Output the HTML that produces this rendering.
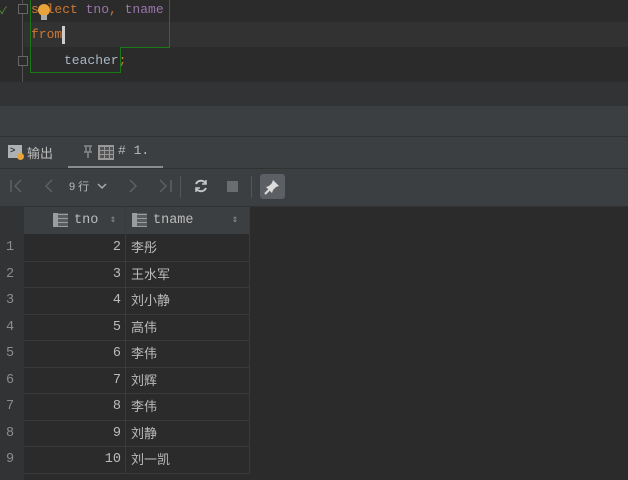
<!DOCTYPE html><html><head><meta charset="utf-8"><style>
*{margin:0;padding:0;box-sizing:border-box}
body{width:628px;height:480px;overflow:hidden;background:#2b2b2b;font-family:"Liberation Mono","Noto Sans CJK SC",monospace;position:relative}
.a{position:absolute}
.code{font-size:13px;line-height:22px}
.cjk{font-family:"Liberation Sans","Noto Sans CJK SC",sans-serif}
</style></head><body>
<div class="a" style="left:0;top:22px;width:628px;height:25px;background:#323232"></div>
<div class="a" style="left:0;top:0;width:24px;height:82px;background:#2b2b2b"></div>
<div class="a" style="left:22px;top:0;width:1px;height:82px;background:#555"></div>
<div class="a" style="left:18px;top:4px;width:10px;height:10px;border:1px solid #666;background:#2b2b2b"></div>
<div class="a" style="left:18px;top:56px;width:10px;height:10px;border:1px solid #666;background:#2b2b2b"></div>
<div class="a" style="left:0;top:2px;color:#5a9e3a;font-size:10px">✓</div>
<svg class="a" style="left:30px;top:0" width="142" height="74"><path d="M0.5 0V72.5H90.5V47.5H139.5V0" fill="none" stroke="#177a17" stroke-width="1" shape-rendering="crispEdges"/></svg>
<div class="a code" style="left:31px;top:-1px;color:#cc7832">select <span style="color:#9876aa">tno</span>, <span style="color:#9876aa">tname</span></div>
<div class="a" style="left:38px;top:4px;width:12px;height:12px;border-radius:50%;background:#e8a33b"></div>
<div class="a" style="left:41px;top:15px;width:6px;height:5px;background:#aaa"></div>
<div class="a code" style="left:31px;top:24px;color:#cc7832">from</div>
<div class="a" style="left:62px;top:26px;width:3px;height:18px;background:#ccc"></div>
<div class="a code" style="left:64px;top:50px;color:#a9b7c6">teacher<span style="color:#cc7832">;</span></div>
<div class="a" style="left:0;top:82px;width:628px;height:24px;background:#313335"></div>
<div class="a" style="left:0;top:106px;width:628px;height:31px;background:#3c3f41"></div>
<div class="a" style="left:0;top:136px;width:628px;height:1px;background:#323232"></div>
<div class="a" style="left:0;top:137px;width:628px;height:31px;background:#3c3f41"></div>
<div class="a" style="left:8px;top:145px;width:14px;height:13px;background:#aeb1b3"></div>
<div class="a" style="left:10px;top:147px;color:#333;font-size:9px;line-height:9px;font-weight:bold">&gt;</div>
<div class="a" style="left:17px;top:153px;width:7px;height:7px;border-radius:50%;background:#e8a33b"></div>
<div class="a cjk" style="left:27px;top:143px;color:#bbb;font-size:13px">输出</div>
<svg class="a" style="left:82px;top:145px" width="12" height="14"><path d="M2 1H10M4 1V7H8V1M2 7H10M6 7V13" stroke="#888" fill="none" stroke-width="1.5"/></svg>
<div class="a" style="left:98px;top:145px;width:16px;height:15px;border:1px solid #999;background:repeating-linear-gradient(90deg,#999 0 1px,transparent 1px 5px),repeating-linear-gradient(0deg,#999 0 1px,#555 1px 4px)"></div>
<div class="a" style="left:118px;top:143px;color:#bbb;font-size:13px">#&nbsp;1.</div>
<div class="a" style="left:68px;top:166px;width:95px;height:2px;background:#8a8d90"></div>
<div class="a" style="left:0;top:168px;width:628px;height:1px;background:#323232"></div>
<div class="a" style="left:0;top:169px;width:628px;height:37px;background:#3c3f41"></div>
<svg class="a" style="left:8px;top:178px" width="170" height="16" fill="none" stroke="#5d6063" stroke-width="1.5"><path d="M3 2V14M13 2L7 8L13 14"/><path d="M44 2L38 8L44 14"/><path d="M122 2L128 8L122 14"/><path d="M152 2L158 8L152 14M163 2V14"/></svg>
<div class="a cjk" style="left:69px;top:178px;color:#bbb;font-size:11px">9 行</div>
<svg class="a" style="left:97px;top:183px" width="10" height="7"><path d="M1 1L5 5L9 1" stroke="#aaa" fill="none" stroke-width="1.5"/></svg>
<div class="a" style="left:180px;top:176px;width:1px;height:22px;background:#555"></div>
<svg class="a" style="left:193px;top:178px" width="16" height="16" fill="none" stroke="#c5c8ca" stroke-width="2"><path d="M13 6A5.5 5.5 0 0 0 3 6M3 10A5.5 5.5 0 0 0 13 10"/><path d="M13 2V6H9M3 14V10H7" stroke-width="1.5"/></svg>
<div class="a" style="left:227px;top:181px;width:11px;height:11px;background:#6a6d70"></div>
<div class="a" style="left:251px;top:176px;width:1px;height:22px;background:#555"></div>
<div class="a" style="left:260px;top:174px;width:25px;height:25px;border-radius:3px;background:#5c6064"></div>
<svg class="a" style="left:263px;top:177px" width="19" height="19"><path d="M10 3L16 9L13 10L10 13L9 16L3 10L6 9L9 6Z" fill="#ddd"/><path d="M6 13L2 17" stroke="#ddd" stroke-width="2"/></svg>
<div class="a" style="left:0;top:206px;width:628px;height:1px;background:#323232"></div>
<div class="a" style="left:0;top:207px;width:24px;height:273px;background:#313335"></div>
<div class="a" style="left:24px;top:207px;width:225px;height:27px;background:#3c3f41"></div>
<div class="a" style="left:125px;top:207px;width:1px;height:267px;background:#3a3a3a"></div>
<div class="a" style="left:53px;top:213px;width:15px;height:14px;background:linear-gradient(90deg,#9a9da0 0 5px,transparent 5px),repeating-linear-gradient(0deg,#9a9da0 0 1px,#5a5d60 1px 4px)"></div>
<div class="a" style="left:74px;top:207px;line-height:27px;color:#bbb;font-size:13.5px">tno</div>
<div class="a" style="left:110px;top:207px;line-height:27px;color:#999;font-size:10px">⇕</div>
<div class="a" style="left:132px;top:213px;width:15px;height:14px;background:linear-gradient(90deg,#9a9da0 0 5px,transparent 5px),repeating-linear-gradient(0deg,#9a9da0 0 1px,#5a5d60 1px 4px)"></div>
<div class="a" style="left:153px;top:207px;line-height:27px;color:#bbb;font-size:13.5px">tname</div>
<div class="a" style="left:232px;top:207px;line-height:27px;color:#999;font-size:10px">⇕</div>
<div id="rows"></div>
<script>
var d=[[2,"李彤"],[3,"王水军"],[4,"刘小静"],[5,"高伟"],[6,"李伟"],[7,"刘辉"],[8,"李伟"],[9,"刘静"],[10,"刘一凯"]],h="";
for(var i=0;i<9;i++){var t=235+i*26.5;
h+='<div class="a" style="left:24px;top:'+(t+25.5)+'px;width:225px;height:1px;background:#3a3a3a"></div>';
h+='<div class="a" style="left:6px;top:'+t+'px;line-height:26px;color:#8a8d90;font-size:13.5px">'+(i+1)+'</div>';
h+='<div class="a" style="left:24px;width:97px;text-align:right;top:'+t+'px;line-height:26px;color:#bbb;font-size:13.5px">'+d[i][0]+'</div>';
h+='<div class="a cjk" style="left:131px;top:'+t+'px;line-height:26px;color:#bbb;font-size:13px">'+d[i][1]+'</div>';}
h+='<div class="a" style="left:249px;top:207px;width:1px;height:267px;background:#3a3a3a"></div>';
document.getElementById("rows").innerHTML=h;
</script>
</body></html>
